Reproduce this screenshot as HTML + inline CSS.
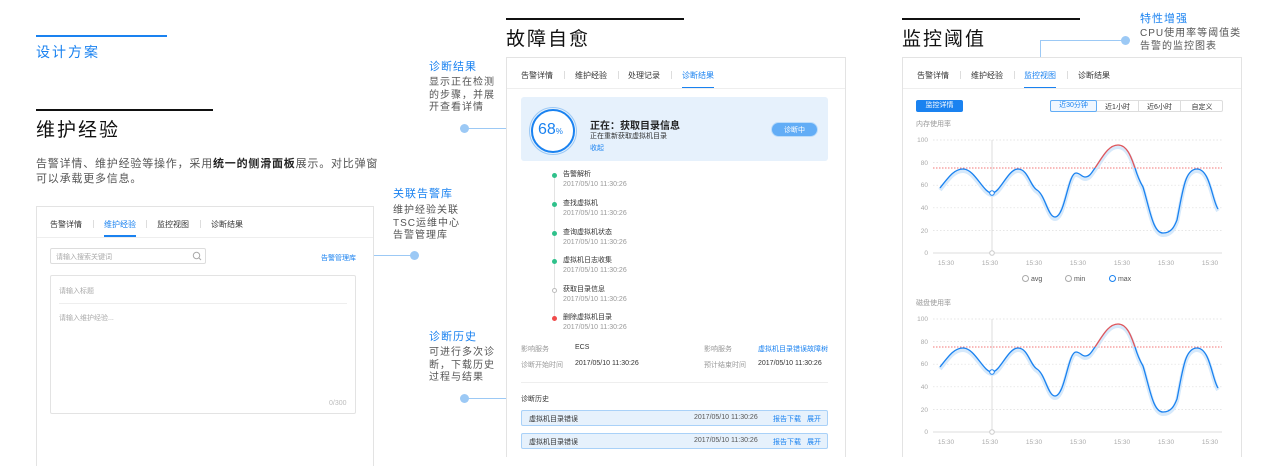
<!DOCTYPE html>
<html><head><meta charset="utf-8">
<style>
*{margin:0;padding:0;box-sizing:border-box}
body{width:1280px;height:453px;overflow:hidden;background:#fff;position:relative;font-family:"Liberation Sans","Noto Sans CJK SC",sans-serif;color:#333}
.a{position:absolute;white-space:nowrap}
.blue{color:#1a82f0}
.h1{font-size:19px;color:#111;letter-spacing:2px}
.panel{position:absolute;border:1px solid #e3e3e3;border-bottom:none;background:#fff}
.tabs{position:absolute;font-size:8px;color:#333}
.tabs span{position:absolute;top:0}
.sep{position:absolute;width:1px;height:8px;background:#ddd}
.ann-t{font-size:11px;color:#1a82f0;letter-spacing:1px}
.ann-d{font-size:10px;color:#555;line-height:12.5px;letter-spacing:1px}
.dot{position:absolute;width:9px;height:9px;border-radius:50%;background:#9cc9f5}
.hl{position:absolute;height:1px;background:#9cc9f5}
.sm{font-size:7px}
.gray{color:#999}
</style></head><body>

<!-- LEFT -->
<div class="a" style="left:36px;top:35px;width:131px;height:2px;background:#1a82f0"></div>
<div class="a blue" style="left:36px;top:42px;font-size:14px;letter-spacing:2px">设计方案</div>
<div class="a" style="left:36px;top:109px;width:177px;height:2px;background:#111"></div>
<div class="a h1" style="left:36px;top:115px">维护经验</div>
<div class="a" style="left:36px;top:157px;font-size:11px;color:#555;line-height:15px;letter-spacing:0.8px;white-space:nowrap">告警详情、维护经验等操作，采用<b style="color:#222">统一的侧滑面板</b>展示。对比弹窗<br>可以承载更多信息。</div>

<div class="panel" style="left:36px;top:206px;width:338px;height:260px">
  <div class="tabs" style="left:13px;top:12px;width:300px">
    <span style="left:0">告警详情</span><div class="sep" style="left:43px;top:1px"></div>
    <span style="left:54px;color:#1a82f0">维护经验</span><div class="sep" style="left:96px;top:1px"></div>
    <span style="left:107px">监控视图</span><div class="sep" style="left:150px;top:1px"></div>
    <span style="left:161px">诊断结果</span>
  </div>
  <div class="a" style="left:67px;top:28px;width:32px;height:2px;background:#1a82f0"></div>
  <div class="a" style="left:0;top:30px;width:336px;height:1px;background:#eee"></div>
  <div class="a" style="left:13px;top:41px;width:156px;height:16px;border:1px solid #ddd;border-radius:2px"></div>
  <div class="a sm" style="left:19px;top:45px;color:#aaa">请输入搜索关键词</div>
  <svg class="a" style="left:155px;top:44px" width="10" height="10"><circle cx="4.5" cy="4.5" r="3.2" fill="none" stroke="#aaa" stroke-width="1"/><line x1="7" y1="7" x2="9" y2="9" stroke="#aaa"/></svg>
  <div class="a sm blue" style="left:284px;top:46px">告警管理库</div>
  <div class="a" style="left:13px;top:68px;width:306px;height:139px;border:1px solid #e3e3e3;border-radius:2px"></div>
  <div class="a sm" style="left:22px;top:79px;color:#aaa">请输入标题</div>
  <div class="a" style="left:22px;top:96px;width:288px;height:1px;background:#eee"></div>
  <div class="a sm" style="left:22px;top:106px;color:#aaa">请输入维护经验...</div>
  <div class="a sm" style="left:292px;top:193px;color:#bbb">0/300</div>
</div>
<div class="hl" style="left:374px;top:255px;width:41px"></div>
<div class="dot" style="left:410px;top:251px"></div>

<div class="a ann-t" style="left:393px;top:185px">关联告警库</div>
<div class="a ann-d" style="left:393px;top:205px">维护经验关联<br>TSC运维中心<br>告警管理库</div>

<!-- MIDDLE annotations -->
<div class="a ann-t" style="left:429px;top:58px">诊断结果</div>
<div class="a ann-d" style="left:429px;top:77px">显示正在检测<br>的步骤，并展<br>开查看详情</div>
<div class="dot" style="left:460px;top:124px"></div>
<div class="hl" style="left:464px;top:128px;width:42px"></div>
<div class="a ann-t" style="left:429px;top:328px">诊断历史</div>
<div class="a ann-d" style="left:429px;top:347px">可进行多次诊<br>断，下载历史<br>过程与结果</div>
<div class="dot" style="left:460px;top:394px"></div>
<div class="hl" style="left:464px;top:398px;width:42px"></div>

<!-- MIDDLE -->
<div class="a" style="left:506px;top:18px;width:178px;height:2px;background:#111"></div>
<div class="a h1" style="left:506px;top:24px">故障自愈</div>
<div class="panel" style="left:506px;top:57px;width:340px;height:400px">
  <div class="tabs" style="left:14px;top:12px;width:320px">
    <span style="left:0">告警详情</span><div class="sep" style="left:43px;top:1px"></div>
    <span style="left:54px">维护经验</span><div class="sep" style="left:97px;top:1px"></div>
    <span style="left:107px">处理记录</span><div class="sep" style="left:150px;top:1px"></div>
    <span style="left:161px;color:#1a82f0">诊断结果</span>
  </div>
  <div class="a" style="left:175px;top:29px;width:32px;height:2px;background:#1a82f0"></div>
  <div class="a" style="left:0;top:30px;width:338px;height:1px;background:#eee"></div>
  <div class="a" style="left:14px;top:39px;width:307px;height:64px;background:#e6f1fc;border-radius:3px"></div>
  <svg class="a" style="left:21px;top:48px" width="50" height="50"><circle cx="25" cy="25" r="23.5" fill="none" stroke="#9cc9f5" stroke-width="1"/><circle cx="25" cy="25" r="21" fill="#fff" stroke="#1a82f0" stroke-width="2"/></svg>
  <div class="a" style="left:31px;top:63px;font-size:16px;color:#1a82f0">68<span style="font-size:8px">%</span></div>
  <div class="a" style="left:83px;top:59px;font-size:10px;font-weight:bold;color:#222">正在：获取目录信息</div>
  <div class="a sm" style="left:83px;top:73px;color:#333">正在重新获取虚拟机目录</div>
  <div class="a sm blue" style="left:83px;top:85px">收起</div>
  <div class="a sm" style="left:264px;top:64px;width:47px;height:15px;border-radius:8px;background:#62adf6;color:#fff;text-align:center;line-height:15px;border:1px solid #bcdcfa">诊断中</div>
  <div class="a" style="left:47px;top:117px;width:1px;height:146px;background:#e3e3e3"></div>
  <div class="a" style="left:45px;top:115px;width:5px;height:5px;border-radius:50%;background:#2fc18b"></div>
  <div class="a" style="left:45px;top:144px;width:5px;height:5px;border-radius:50%;background:#2fc18b"></div>
  <div class="a" style="left:45px;top:173px;width:5px;height:5px;border-radius:50%;background:#2fc18b"></div>
  <div class="a" style="left:45px;top:201px;width:5px;height:5px;border-radius:50%;background:#2fc18b"></div>
  <div class="a" style="left:45px;top:230px;width:5px;height:5px;border-radius:50%;background:#fff;border:1px solid #bbb"></div>
  <div class="a" style="left:45px;top:258px;width:5px;height:5px;border-radius:50%;background:#f04b4b"></div>
  <div class="a sm" style="left:56px;top:112px;line-height:9.5px">告警解析<br><span class="gray">2017/05/10 11:30:26</span></div>
  <div class="a sm" style="left:56px;top:141px;line-height:9.5px">查找虚拟机<br><span class="gray">2017/05/10 11:30:26</span></div>
  <div class="a sm" style="left:56px;top:170px;line-height:9.5px">查询虚拟机状态<br><span class="gray">2017/05/10 11:30:26</span></div>
  <div class="a sm" style="left:56px;top:198px;line-height:9.5px">虚拟机日志收集<br><span class="gray">2017/05/10 11:30:26</span></div>
  <div class="a sm" style="left:56px;top:227px;line-height:9.5px">获取目录信息<br><span class="gray">2017/05/10 11:30:26</span></div>
  <div class="a sm" style="left:56px;top:255px;line-height:9.5px">删除虚拟机目录<br><span class="gray">2017/05/10 11:30:26</span></div>
  <div class="a sm gray" style="left:14px;top:286px">影响服务</div>
  <div class="a sm" style="left:68px;top:286px">ECS</div>
  <div class="a sm gray" style="left:197px;top:286px">影响服务</div>
  <div class="a sm blue" style="left:251px;top:286px">虚拟机目录错误故障树</div>
  <div class="a sm gray" style="left:14px;top:302px">诊断开始时间</div>
  <div class="a sm" style="left:68px;top:302px">2017/05/10 11:30:26</div>
  <div class="a sm gray" style="left:197px;top:302px">预计结束时间</div>
  <div class="a sm" style="left:251px;top:302px">2017/05/10 11:30:26</div>
  <div class="a" style="left:14px;top:324px;width:307px;height:1px;background:#eee"></div>
  <div class="a sm" style="left:14px;top:336px">诊断历史</div>
  <div class="a" style="left:14px;top:352px;width:307px;height:16px;background:#e6f1fc;border:1px solid #a9d1f8;border-radius:2px"></div>
  <div class="a sm" style="left:22px;top:356px">虚拟机目录错误</div>
  <div class="a sm" style="left:187px;top:356px;color:#555">2017/05/10 11:30:26</div>
  <div class="a sm blue" style="left:266px;top:356px">报告下载</div>
  <div class="a sm blue" style="left:300px;top:356px">展开</div>
  <div class="a" style="left:14px;top:375px;width:307px;height:16px;background:#e6f1fc;border:1px solid #a9d1f8;border-radius:2px"></div>
  <div class="a sm" style="left:22px;top:379px">虚拟机目录错误</div>
  <div class="a sm" style="left:187px;top:379px;color:#555">2017/05/10 11:30:26</div>
  <div class="a sm blue" style="left:266px;top:379px">报告下载</div>
  <div class="a sm blue" style="left:300px;top:379px">展开</div>
</div>

<!-- RIGHT -->
<div class="a" style="left:902px;top:18px;width:178px;height:2px;background:#111"></div>
<div class="a h1" style="left:902px;top:24px">监控阈值</div>
<div class="a ann-t" style="left:1140px;top:10px">特性增强</div>
<div class="a ann-d" style="left:1140px;top:28px">CPU使用率等阈值类<br>告警的监控图表</div>
<div class="hl" style="left:1040px;top:40px;width:85px"></div>
<div class="a" style="left:1040px;top:40px;width:1px;height:23px;background:#9cc9f5"></div>
<div class="dot" style="left:1121px;top:36px"></div>

<div class="panel" style="left:902px;top:57px;width:340px;height:400px">
  <div class="tabs" style="left:14px;top:12px;width:320px">
    <span style="left:0">告警详情</span><div class="sep" style="left:43px;top:1px"></div>
    <span style="left:54px">维护经验</span><div class="sep" style="left:97px;top:1px"></div>
    <span style="left:107px;color:#1a82f0">监控视图</span><div class="sep" style="left:150px;top:1px"></div>
    <span style="left:161px">诊断结果</span>
  </div>
  <div class="a" style="left:121px;top:29px;width:32px;height:2px;background:#1a82f0"></div>
  <div class="a" style="left:0;top:30px;width:338px;height:1px;background:#eee"></div>
  <div class="a sm" style="left:13px;top:42px;width:47px;height:12px;background:#1a82f0;color:#fff;text-align:center;line-height:12px;border-radius:2px">监控详情</div>
  <div class="a" style="left:147px;top:42px;width:173px;height:12px;border:1px solid #ddd;border-radius:2px"></div>
  <div class="a sm blue" style="left:147px;top:42px;width:47px;height:12px;border:1px solid #62adf6;background:#f0f7ff;text-align:center;line-height:10px;border-radius:2px">近30分钟</div>
  <div class="a" style="left:235px;top:43px;width:1px;height:10px;background:#ddd"></div>
  <div class="a" style="left:277px;top:43px;width:1px;height:10px;background:#ddd"></div>
  <div class="a sm" style="left:194px;top:44px;width:41px;text-align:center">近1小时</div>
  <div class="a sm" style="left:236px;top:44px;width:41px;text-align:center">近6小时</div>
  <div class="a sm" style="left:278px;top:44px;width:42px;text-align:center">自定义</div>
  <div class="a sm gray" style="left:13px;top:61px">内存使用率</div>
  <div class="a sm gray" style="left:13px;top:240px">磁盘使用率</div>
  <div class="a sm" style="left:119px;top:217px;color:#555"><span style="display:inline-block;width:7px;height:7px;border:1px solid #aaa;border-radius:50%;vertical-align:-1px"></span> avg</div>
  <div class="a sm" style="left:162px;top:217px;color:#555"><span style="display:inline-block;width:7px;height:7px;border:1px solid #aaa;border-radius:50%;vertical-align:-1px"></span> min</div>
  <div class="a sm" style="left:206px;top:217px;color:#555"><span style="display:inline-block;width:7px;height:7px;border:1.5px solid #1a82f0;border-radius:50%;vertical-align:-1px"></span> max</div>
</div>

<svg class="a" style="left:0;top:0" width="1280" height="453">
<defs>
  <clipPath id="lo"><rect x="900" y="168" width="340" height="200"/></clipPath>
  <clipPath id="hi"><rect x="900" y="100" width="340" height="68"/></clipPath>
  <g id="chart">
    <g stroke="#ddd" stroke-dasharray="1.5,2" stroke-width="0.7">
      <line x1="933" y1="140" x2="1222" y2="140"/><line x1="933" y1="162.6" x2="1222" y2="162.6"/>
      <line x1="933" y1="185.2" x2="1222" y2="185.2"/><line x1="933" y1="207.8" x2="1222" y2="207.8"/>
      <line x1="933" y1="230.4" x2="1222" y2="230.4"/>
    </g>
    <line x1="933" y1="253" x2="1222" y2="253" stroke="#ddd" stroke-width="1"/>
    <line x1="933" y1="168" x2="1222" y2="168" stroke="#f04b4b" stroke-dasharray="1.5,1.5" stroke-width="0.7"/>
    <line x1="992" y1="140" x2="992" y2="253" stroke="#ddd" stroke-width="1"/>
    <g font-size="6.5" fill="#aaa" font-family="Liberation Sans,sans-serif" text-anchor="end">
      <text x="928" y="142">100</text><text x="928" y="165">80</text><text x="928" y="187">60</text>
      <text x="928" y="210">40</text><text x="928" y="233">20</text><text x="928" y="255">0</text>
    </g>
    <g font-size="6.5" fill="#aaa" font-family="Liberation Sans,sans-serif" text-anchor="middle">
      <text x="946" y="265">15:30</text><text x="990" y="265">15:30</text><text x="1034" y="265">15:30</text>
      <text x="1078" y="265">15:30</text><text x="1122" y="265">15:30</text><text x="1166" y="265">15:30</text><text x="1210" y="265">15:30</text>
    </g>
    <path id="cv" d="M940,188 C950,175 955,169 963,169 C975,169 983,193 992,193 C1000,193 1008,169 1018,169 C1028,169 1030,186 1037,190 C1045,195 1048,217 1055,217 C1065,217 1068,173 1076,173 C1080,173 1082,177 1085,177 C1090,177 1092,172 1095,168 C1102,158 1108,145 1118,145 C1128,145 1132,160 1135,168 C1138,178 1140,182 1143,187 C1150,210 1153,233 1163,233 C1172,233 1175,225 1177,220 C1183,190 1185,169 1197,169 C1210,169 1212,200 1218,209" fill="none"/>
  </g>
</defs>
<g>
  <use href="#chart"/>
  <use href="#cv" stroke="#d6e9fb" stroke-width="4" transform="translate(0,2)"/>
  <use href="#cv" stroke="#1a82f0" stroke-width="1.3" clip-path="url(#lo)"/>
  <use href="#cv" stroke="#e0565b" stroke-width="1.3" clip-path="url(#hi)"/>
  <circle cx="992" cy="193" r="2.3" fill="#fff" stroke="#1a82f0" stroke-width="1"/>
  <circle cx="992" cy="253" r="2.3" fill="#fff" stroke="#ccc" stroke-width="1"/>
</g>
<g transform="translate(0,179)">
  <use href="#chart"/>
  <use href="#cv" stroke="#d6e9fb" stroke-width="4" transform="translate(0,2)"/>
  <use href="#cv" stroke="#1a82f0" stroke-width="1.3" clip-path="url(#lo)"/>
  <use href="#cv" stroke="#e0565b" stroke-width="1.3" clip-path="url(#hi)"/>
  <circle cx="992" cy="193" r="2.3" fill="#fff" stroke="#1a82f0" stroke-width="1"/>
  <circle cx="992" cy="253" r="2.3" fill="#fff" stroke="#ccc" stroke-width="1"/>
</g>
</svg>
</body></html>
